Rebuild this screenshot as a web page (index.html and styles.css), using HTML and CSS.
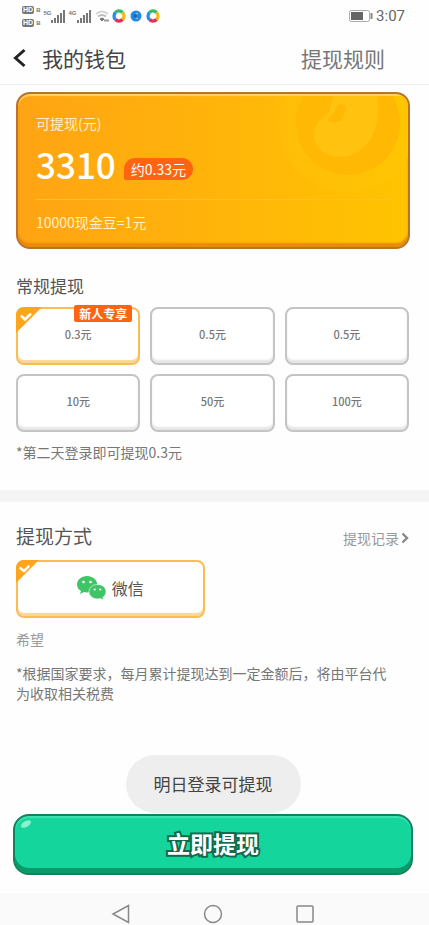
FILE: index.html
```html
<!DOCTYPE html>
<html lang="zh-CN">
<head>
<meta charset="utf-8">
<meta name="viewport" content="width=device-width, initial-scale=1">
<title>我的钱包</title>
<link rel="stylesheet" href="styles.css">
</head>
<body>
<div class="status">
  <div class="status-group">
    <span class="hd-stack">
      <span class="hd-row"><b class="hd">HD</b><span class="hd-sub">B</span></span>
      <span class="hd-row"><b class="hd">HD</b><span class="hd-sub">B</span></span>
    </span>
    <span class="signal"><span class="net">5G</span>
      <svg width="14" height="13" viewBox="0 0 14 13" fill="#777"><path d="M0 10h2v3H0zM3 8h2v5H3zM6 5h2v8H6zM9 3h2v10H9zM12 0h2v13h-2z"/></svg></span>
    <span class="signal"><span class="net">4G</span>
      <svg width="14" height="13" viewBox="0 0 14 13" fill="#777"><path d="M0 10h2v3H0zM3 8h2v5H3zM6 5h2v8H6zM9 3h2v10H9zM12 0h2v13h-2z"/></svg></span>
    <svg class="wifi" width="14" height="12" viewBox="0 0 14 12" fill="none" stroke-width="2"><path d="M1 4Q7-1 13 4" stroke="#d4d4d4"/><path d="M3 6.500Q7 3.500 11 6.500" stroke="#bbb"/><path d="M5 9Q7 7 9 9L7 11z" fill="#777" stroke="#777" stroke-width="1"/><path d="M9 10.500h5" stroke="#999"/></svg>
    <svg width="14" height="14" viewBox="0 0 14 14" fill="none" stroke-width="3.400"><path d="M3.500 3.500a5 5 0 0 1 7 0" stroke="#32bd62"/><path d="M10.500 3.500a5 5 0 0 1 0 7" stroke="#f5b81c"/><path d="M10.500 10.500a5 5 0 0 1-7 0" stroke="#e62e55"/><path d="M3.500 10.500a5 5 0 0 1 0-7" stroke="#258ce8"/></svg>
    <svg class="blue-dot" width="12" height="12" viewBox="0 0 12 12"><circle cx="6" cy="6" r="5.500" fill="#2388df"/><path d="M3 6l5-3M3 6l5 3" stroke="#8fc8f5" stroke-width="1.300"/><circle cx="5" cy="6" r="2" fill="#1268b8"/></svg>
    <svg width="14" height="14" viewBox="0 0 14 14" fill="none" stroke-width="3.400"><path d="M3.500 3.500a5 5 0 0 1 7 0" stroke="#32bd62"/><path d="M10.500 3.500a5 5 0 0 1 0 7" stroke="#f5b81c"/><path d="M10.500 10.500a5 5 0 0 1-7 0" stroke="#e62e55"/><path d="M3.500 10.500a5 5 0 0 1 0-7" stroke="#258ce8"/></svg>
  </div>
  <div class="status-group clock">
    <svg width="24" height="12" viewBox="0 0 24 12"><rect x=".5" y=".5" width="20" height="11" rx="2" fill="#fff" stroke="#aaa"/><rect x="2" y="2" width="12" height="8" fill="#666"/><path d="M21.500 3h2v6h-2z" fill="#888"/></svg>
    <span>3:07</span>
  </div>
</div>

<header class="topbar">
  <button class="back" type="button" aria-label="返回">
    <svg width="13" height="20" viewBox="0 0 13 20" fill="none" stroke="#222" stroke-width="3"><path d="M11.500 2L2.500 10l9 8"/></svg>
  </button>
  <h1>我的钱包</h1>
  <a class="rules" href="#rules">提现规则</a>
</header>

<main>
  <section class="card">
    <svg class="coin" width="138" height="104" viewBox="0 0 138 104">
      <defs><linearGradient id="halo" x1="0" x2="1"><stop offset="0" stop-color="#ffbd08"/><stop offset="1" stop-color="#ffc602"/></linearGradient></defs>
      <circle cx="78" cy="27" r="69" fill="url(#halo)"/>
      <circle cx="78" cy="27" r="52" fill="#ffb804"/>
      <path d="M64 0H107C113 28 99 61 70 61C54 61 42 50 44 36C46 26 52 22 57 18C62 13 59 6 64 0Z" fill="#ffc20e"/>
      <path d="M67 10C71 6 77 9 75 15C74 22 68 28 61 26C55 24 61 20 64 17C66 14 65 12 67 10Z" fill="#ffb804"/>
    </svg>
    <p class="card-text">可提现(元)</p>
    <p class="balance"><strong>3310</strong><span class="approx">约0.33元</span></p>
    <p class="card-text rate">10000现金豆=1元</p>
  </section>

  <section class="block">
    <h2>常规提现</h2>
    <div class="amounts" role="radiogroup" aria-label="常规提现">
      <label class="tile"><input type="radio" name="amount" checked><svg class="corner" width="26" height="26" viewBox="0 0 26 26"><path d="M0 0h26L0 26z" fill="#ffa51b"/><path d="M5 8.500l4 4 6-6" fill="none" stroke="#fff" stroke-width="2.500"/></svg><span>0.3元</span><em class="tag">新人专享</em></label>
      <label class="tile"><input type="radio" name="amount"><span>0.5元</span></label>
      <label class="tile"><input type="radio" name="amount"><span>0.5元</span></label>
      <label class="tile"><input type="radio" name="amount"><span>10元</span></label>
      <label class="tile"><input type="radio" name="amount"><span>50元</span></label>
      <label class="tile"><input type="radio" name="amount"><span>100元</span></label>
    </div>
    <p class="note">*第二天登录即可提现0.3元</p>
  </section>

  <section class="block method">
    <div class="method-head">
      <h2 class="large">提现方式</h2>
      <a class="history" href="#history">提现记录<svg width="8" height="12" viewBox="0 0 8 12" fill="none" stroke="#888" stroke-width="2.400"><path d="M1.500 1.500L6 6l-4.500 4.500"/></svg></a>
    </div>
    <label class="tile pay"><input type="radio" name="pay" checked><svg class="corner" width="23" height="23" viewBox="0 0 26 26"><path d="M0 0h26L0 26z" fill="#ffa51b"/><path d="M4 8.500l5 4 6-6" fill="none" stroke="#fff" stroke-width="2.800"/></svg>
      <svg width="29" height="24" viewBox="0 0 29 24"><path d="M10 0C4.500 0 0 3.700 0 8.400c0 2.800 1.500 5 4 6.500L3 18l4-2c1 .3 2 .4 3 .4 5.500 0 10.200-3.500 10.200-8S15.500 0 10 0z" fill="#3fc566"/><path d="M20.500 8.500c-4.900 0-8.500 3.100-8.500 7.200s3.700 7.200 8.500 7.200c1 0 2-.1 2.900-.4l3.100 1.500-.7-2.700c1.900-1.300 3.200-3.200 3.200-5.600 0-4.100-3.700-7.200-8.500-7.200z" fill="#3fc566" stroke="#fff" stroke-width=".6"/><g fill="#fff"><circle cx="6.500" cy="6" r="1.300"/><circle cx="13.500" cy="6" r="1.300"/><circle cx="17.700" cy="13.500" r="1.100"/><circle cx="23.300" cy="13.500" r="1.100"/></g></svg>
      <span>微信</span></label>
    <p class="hope">希望</p>
    <p class="note tax">*根据国家要求，每月累计提现达到一定金额后，将由平台代为收取相关税费</p>
  </section>
</main>

<footer>
  <p class="toast" role="status">明日登录可提现</p>
  <button class="submit" type="button"><svg class="shine" width="12" height="10" viewBox="0 0 12 10"><ellipse cx="6" cy="5" rx="5.500" ry="3" transform="rotate(-32 6 5)" fill="#8df0cd"/></svg>立即提现</button>
  <nav class="sysnav">
    <button type="button" aria-label="后退"><svg width="20" height="20" viewBox="0 0 20 20"><path d="M17.500 1.500v17L2 10z"/></svg></button>
    <button type="button" aria-label="主页"><svg width="20" height="20" viewBox="0 0 20 20"><circle cx="10" cy="10" r="8.500"/></svg></button>
    <button type="button" aria-label="最近任务"><svg width="20" height="20" viewBox="0 0 20 20"><rect x="2" y="2" width="16" height="16" rx="1"/></svg></button>
  </nav>
</footer>
</body>
</html>
```
FILE: styles.css
```css
* { box-sizing: border-box; }
body {
  margin: 0;
  min-height: 100vh;
  display: flex;
  flex-direction: column;
  background: #fefefe;
  color: #777;
  font: 14px/20px "Noto Sans CJK SC", sans-serif;
}
h1, h2, p { margin: 0; font-weight: 400; }
button { border: 0; padding: 0; background: none; font: inherit; }
a { color: inherit; text-decoration: none; }
svg { display: block; flex: none; }

.status {
  display: flex;
  justify-content: space-between;
  height: 32px;
  padding: 0 24px 0 22px;
}
.status-group { display: flex; align-items: center; gap: 3px; }
.hd-stack { display: flex; flex-direction: column; gap: 5px; }
.hd-row { display: flex; align-items: center; gap: 2px; }
.hd {
  padding: 0 1px;
  border-radius: 2px;
  background: #777;
  color: #fff;
  font: 700 7px/8px "Liberation Sans", sans-serif;
}
.hd-sub { font: 700 6px/8px "Liberation Sans", sans-serif; }
.signal { display: flex; align-items: flex-start; }
.net { font: 700 6px/6px "Liberation Sans", sans-serif; }
.wifi { margin-left: 1px; }
.blue-dot { margin: 0 1px; }
.clock { font: 15px/20px Roboto, sans-serif; color: #666; }

.topbar {
  display: flex;
  align-items: center;
  height: 53px;
  padding: 0 44px 0 13px;
  border-bottom: 1px solid #f0f0f0;
}
.back { width: 29px; }
.topbar h1 { font-size: 21px; line-height: 28px; color: #444; }
.rules { margin-left: auto; font-size: 21px; line-height: 28px; color: #777; }

.card {
  position: relative;
  margin: 7px 19px 0 16px;
  padding: 19px 17px 15px 18px;
  border: 2px solid #b8742a;
  border-radius: 14px;
  background: linear-gradient(90deg, #ffa414, #ffc400);
  box-shadow: inset 0 -4px 2px #e98a08, inset 0 2px 1px #ffd36c;
  overflow: hidden;
}
.coin { position: absolute; top: 2px; right: 0; }
.card-text { position: relative; color: #fff0c8; }
.balance {
  position: relative;
  display: flex;
  align-items: center;
  gap: 8px;
  margin-top: 9px;
  padding-bottom: 13px;
  border-bottom: 1px solid #ffc02c;
}
.balance strong { font-size: 35px; font-weight: 500; line-height: 44px; color: #fff; }
.approx {
  margin-top: 10px;
  padding: 0 7px;
  line-height: 22px;
  border-radius: 11px 11px 11px 2px;
  background: #ff6412;
  color: #fff;
}
.rate { margin-top: 12px; }

.block { padding: 25px 20px 0 16px; }
h2 { font-size: 17px; line-height: 24px; color: #555; }
.amounts {
  display: grid;
  grid-template-columns: repeat(3, 1fr);
  gap: 9px 10px;
  margin-top: 9px;
}
.tile {
  position: relative;
  display: flex;
  align-items: center;
  justify-content: center;
  height: 58px;
  padding-bottom: 4px;
  border: 2px solid #c4c4c4;
  border-radius: 8px;
  background: #fff;
  box-shadow: inset 0 -3px 2px #e6e6e6;
  font-size: 11px;
  font-weight: 500;
}
.tile input { position: absolute; opacity: 0; margin: 0; }
.tile:has(input:checked) { border-color: #f9bd55; box-shadow: inset 0 -3px 1px #fbd596; }
.corner { position: absolute; top: -2px; left: -2px; border-top-left-radius: 8px; }
.tag {
  position: absolute;
  top: -4px;
  right: 6px;
  padding: 0 5px;
  border-radius: 2px;
  background: #fa6515;
  color: #fff;
  font: 700 12px/17px "Noto Sans CJK SC", sans-serif;
}
.note { margin-top: 10px; }

.method { margin-top: 28px; padding-top: 20px; border-top: 12px solid #f5f5f5; }
.method-head { display: flex; align-items: center; justify-content: space-between; }
h2.large { font-size: 19px; line-height: 28px; }
.history { display: flex; align-items: center; gap: 2px; padding-top: 4px; color: #999; }
.pay {
  width: 48%;
  margin-top: 10px;
  gap: 6px;
  padding-bottom: 2px;
  font-size: 16px;
  font-weight: 400;
  color: #555;
}
.hope { margin-top: 11px; color: #999; }
.tax { margin-top: 14px; padding-right: 12px; }

footer { margin-top: auto; display: flex; flex-direction: column; }
.toast {
  align-self: center;
  margin-right: 3px;
  padding: 19px 28px;
  border-radius: 29px;
  background: #eee;
  color: #444;
  font-size: 17px;
}
.submit {
  position: relative;
  height: 61px;
  margin: 1px 16px 18px 13px;
  padding-bottom: 4px;
  border: 2px solid #15805c;
  border-radius: 16px;
  background: #14d69d;
  box-shadow: inset 0 -5px 0 #089b69, inset 0 2px 1px #3be3b2;
  color: #fff;
  font-size: 23px;
  font-weight: 700;
  line-height: 32px;
  -webkit-text-stroke: 4px #12694c;
  paint-order: stroke fill;
}
.shine { position: absolute; top: 3px; left: 5px; }
.sysnav {
  display: flex;
  justify-content: center;
  gap: 72px;
  height: 32px;
  padding: 10px 3px 0 0;
  background: #fafafa;
}
.sysnav svg { fill: none; stroke: #888; stroke-width: 1.5; }
```
